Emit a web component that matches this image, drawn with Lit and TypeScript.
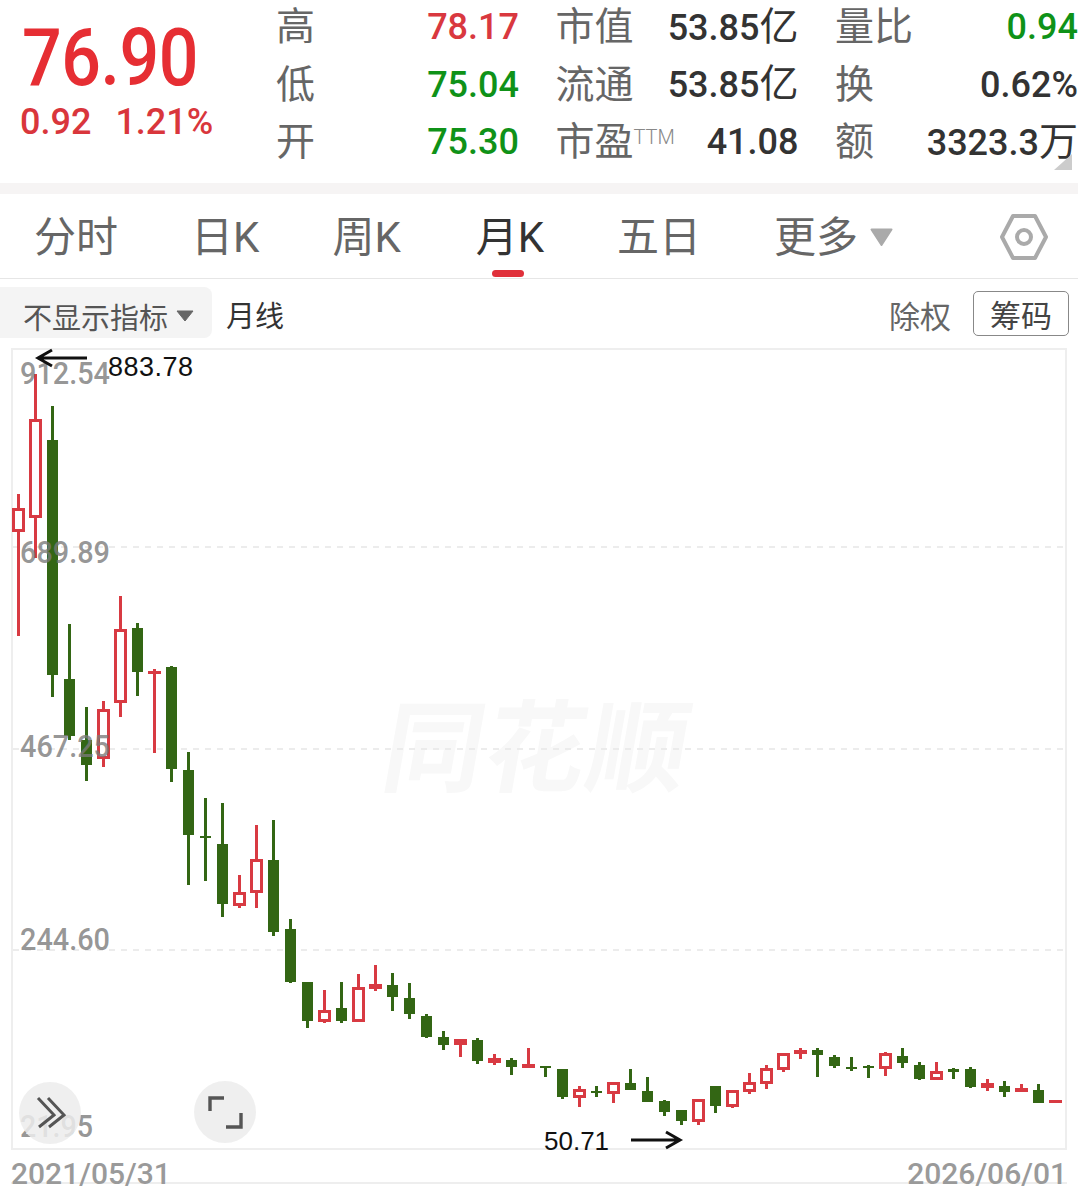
import { LitElement, html, css, svg } from "lit";
import { customElement } from "lit/decorators.js";

type C = [0 | 1, number, number, number, number];
// [red?, wickTop, wickBottom, bodyTop, bodyBottom]
const D: C[] = [
  [1,494,636,508,532],[1,374,558,419,518],[0,406,697,440,675],[0,624,740,679,736],[0,707,781,740,765],
  [1,701,767,709,759],[1,596,717,629,703],[0,623,696,628,672],[1,669,753,671,674],[0,666,782,667,769],
  [0,752,885,770,835],[0,798,881,836,838],[0,803,917,844,904],[1,875,908,892,906],[1,825,908,859,893],
  [0,820,936,860,932],[0,919,983,929,982],[0,982,1028,982,1021],[1,990,1023,1010,1022],[0,982,1023,1008,1021],
  [1,974,1022,987,1022],[1,965,991,984,989],[0,973,1011,985,997],[0,983,1019,998,1014],[0,1014,1038,1016,1037],
  [0,1031,1050,1037,1045],[1,1039,1057,1039,1045],[0,1038,1064,1040,1061],[1,1054,1065,1058,1063],[0,1058,1075,1060,1067],
  [1,1048,1068,1064,1068],[0,1066,1077,1066,1068],[0,1069,1099,1069,1097],[1,1086,1107,1089,1098],[0,1086,1097,1091,1093],
  [1,1082,1103,1082,1094],[0,1069,1090,1083,1090],[0,1077,1102,1091,1102],[0,1100,1116,1101,1112],[0,1110,1125,1110,1121],
  [1,1099,1125,1099,1122],[0,1086,1113,1086,1106],[1,1090,1108,1090,1107],[1,1073,1094,1082,1092],[1,1065,1089,1068,1084],
  [1,1053,1072,1053,1070],[1,1048,1059,1050,1054],[0,1048,1077,1050,1055],[0,1055,1068,1057,1066],[0,1057,1071,1067,1069],
  [0,1065,1078,1066,1068],[1,1052,1076,1053,1069],[0,1048,1068,1056,1063],[0,1062,1080,1065,1079],[1,1062,1080,1071,1080],
  [0,1068,1079,1069,1072],[0,1067,1088,1069,1087],[1,1079,1091,1083,1088],[0,1081,1097,1086,1092],[1,1084,1092,1088,1092],
  [0,1084,1103,1090,1103],[1,1100,1103,1100,1103],
];
const RED = "#d83a42";
const GREEN = "#336614";

function candle(c: C, i: number) {
  const [red, wt, wb, bt, bb] = c;
  const x = 18.5 + i * 17;
  if (!red) {
    return svg`<rect x=${x - 1.5} y=${wt} width="3" height=${wb - wt} fill=${GREEN}></rect>
      <rect x=${x - 5.5} y=${bt} width="11" height=${bb - bt} fill=${GREEN}></rect>`;
  }
  const wick = svg`<rect x=${x - 1.5} y=${wt} width="3" height=${wb - wt} fill=${RED}></rect>`;
  if (bb - bt <= 7) {
    return svg`${wick}<rect x=${x - 6.5} y=${bt} width="13" height=${bb - bt} fill=${RED}></rect>`;
  }
  return svg`${wick}<rect x=${x - 5} y=${bt + 1.5} width="10" height=${bb - bt - 3} fill="#fff" stroke=${RED} stroke-width="3"></rect>`;
}

@customElement("app-root")
export class AppRoot extends LitElement {
  static styles = css`
    :host { display: block; width: 1078px; height: 1192px; overflow: hidden; background: #fff;
      font-family: Roboto, "Noto Sans CJK SC", sans-serif; color: #333; }
    .head { display: flex; height: 183px; box-sizing: border-box; }
    .quote { width: 277px; flex: none; padding: 23px 0 0 22px; box-sizing: border-box; }
    .price { font-size: 79px; line-height: 70px; font-weight: 500; letter-spacing: -0.5px; transform: scaleX(.885); transform-origin: left; color: #e62e33; }
    .chg { display: flex; gap: 24px; margin: 8px 0 0 -2px; font-size: 36px; line-height: 42px; font-weight: 500; color: #d9363c; }
    .stats { display: grid; grid-template-columns: repeat(3, 242px); column-gap: 37.5px; grid-auto-rows: 57.5px; position: relative; flex: none; width: 801px; margin-top: -1px; align-content: start; }
    .cell { display: flex; justify-content: space-between; align-items: center; white-space: nowrap; }
    .lab { font-size: 39px; color: #666; font-weight: 400; line-height: 57px; margin-left: -1px; }
    .lab sup { font: 300 20px Roboto, sans-serif; color: #888; vertical-align: 11px; line-height: 0; }
    .val { font-size: 36px; font-weight: 500; line-height: 57px; color: #333; }
    .val i { font-style: normal; font-size: 39px; font-weight: 400; }
    .r { color: #d9383f; } .g { color: #0f9218; }
    .corner { position: absolute; right: 6px; bottom: 13px; width: 0; height: 0; border-left: 18px solid transparent; border-bottom: 16px solid #ccc; }
    .band { height: 11px; background: #f6f4f4; }
    .tabs { height: 84px; display: flex; border-bottom: 1px solid #e6e6e6; padding: 0 30px 0 34px; align-items: center; gap: 73px; box-sizing: content-box; }
    .tab { position: relative; font-size: 42px; line-height: 84px; color: #666; white-space: nowrap; display: flex; align-items: center; font-weight: 400; margin-top: 3px; }
    .tab.on { color: #333; margin-left: 2px; }
    .tab.on::after { content: ""; position: absolute; left: 16px; bottom: 3px; width: 32px; height: 7px; border-radius: 4px; background: #e0303a; }
    .tri { margin-left: 11px; margin-top: -2px; }
    .gear { margin-left: auto; margin-top: 2px; display: block; }
    .tools { height: 69px; display: flex; align-items: center; position: relative; }
    .sel { width: 212px; height: 51px; margin-top: -2px; box-sizing: border-box; background: #f4f4f4; border-radius: 0 8px 8px 0; display: flex; align-items: center; padding: 6px 0 0 23px; font-size: 29px; color: #555; gap: 8px; white-space: nowrap; font-weight: 400; }
    .line { font-size: 29px; color: #333; margin-left: 14px; margin-top: 1px; }
    .fq { margin-left: auto; font-size: 31px; color: #666; margin-top: 2px; }
    .chip { margin: -1px 9px 0 22px; width: 96px; height: 45px; box-sizing: border-box; border: 1px solid #888; border-radius: 5px; font-size: 31px; color: #444; display: flex; align-items: center; justify-content: center; }
    .chart { position: relative; margin-left: 11px; width: 1056px; height: 802px; box-sizing: border-box; border: 2px solid #eee; }
    .wm { position: absolute; left: 373px; top: 336px; font: 700 100px/110px "Noto Sans CJK SC", sans-serif; color: #f8f8f8; transform: skewX(-10deg); white-space: nowrap; letter-spacing: 2px; }
    svg.plot { position: absolute; left: -2px; top: -2px; overflow: visible; }
    .axis { font: 500 31px Roboto, sans-serif; fill: rgba(122,122,122,.8); }
    .note { font: 400 27px "Liberation Sans", sans-serif; fill: #111; letter-spacing: .5px; }
    .note.low { font-size: 26px; letter-spacing: 0; }
    .btn { position: absolute; width: 62px; height: 62px; border-radius: 50%; background: rgba(236,236,236,.85); display: flex; align-items: center; justify-content: center; }
    .b1 { left: 6px; top: 732px; }
    .b2 { left: 181px; top: 731px; }
    .dates { height: 32px; margin: 0 11px; display: flex; justify-content: space-between; border-bottom: 2px solid #eee; font-size: 30px; font-weight: 500; line-height: 48px; color: #9a9a9a; }
  `;

  render() {
    const row = (a: unknown, b: unknown, cl = "") => html`<div class="cell"><span class="lab">${a}</span><span class="val ${cl}">${b}</span></div>`;
    return html`
      <div class="head">
        <div class="quote">
          <div class="price">76.90</div>
          <div class="chg"><span>0.92</span><span>1.21%</span></div>
        </div>
        <div class="stats">
          ${row("高", "78.17", "r")}${row("市值", html`53.85<i>亿</i>`)}${row("量比", "0.94", "g")}
          ${row("低", "75.04", "g")}${row("流通", html`53.85<i>亿</i>`)}${row("换", "0.62%")}
          ${row("开", "75.30", "g")}${row(html`市盈<sup>TTM</sup>`, "41.08")}${row("额", html`3323.3<i>万</i>`)}
          <div class="corner"></div>
        </div>
      </div>
      <div class="band"></div>
      <div class="tabs">
        <div class="tab">分时</div>
        <div class="tab">日K</div>
        <div class="tab">周K</div>
        <div class="tab on">月K</div>
        <div class="tab">五日</div>
        <div class="tab">更多<svg class="tri" width="25" height="20" viewBox="0 0 25 20"><path d="M2.5 2.5h20L12.5 18z" fill="#aaa" stroke="#aaa" stroke-width="2" stroke-linejoin="round"/></svg></div>
        <svg class="gear" width="48" height="48" viewBox="0 0 48 48" fill="none" stroke="#aaa" stroke-width="4" stroke-linejoin="round"><path d="M13 3h22l11 21-11 21H13L2 24z"/><circle cx="24" cy="24" r="7"/></svg>
      </div>
      <div class="tools">
        <div class="sel">不显示指标<svg width="18" height="12" viewBox="0 0 18 12"><path d="M1 1h16L9 11z" fill="#666" stroke="#666" stroke-linejoin="round"/></svg></div>
        <div class="line">月线</div>
        <div class="fq">除权</div>
        <div class="chip">筹码</div>
      </div>
      <div class="chart">
        <div class="wm">同花顺</div>
        <svg class="plot" width="1056" height="802" viewBox="11 348 1056 802">
          ${[547, 749, 950].map((y) => svg`<line x1="13" x2="1065" y1=${y} y2=${y} stroke="#e6e6e6" stroke-width="1.5" stroke-dasharray="6 6"></line>`)}
          ${D.map((c, i) => candle(c, i))}
          <text class="axis" x="20" y="384" textLength="90" lengthAdjust="spacingAndGlyphs">912.54</text>
          <text class="axis" x="20" y="563" textLength="90" lengthAdjust="spacingAndGlyphs">689.89</text>
          <text class="axis" x="20" y="757" textLength="90" lengthAdjust="spacingAndGlyphs">467.25</text>
          <text class="axis" x="20" y="950" textLength="90" lengthAdjust="spacingAndGlyphs">244.60</text>
          <text class="axis" x="20" y="1137" textLength="73" lengthAdjust="spacingAndGlyphs">21.95</text>
          <text class="note" x="108" y="376">883.78</text>
          <text class="note low" x="544" y="1150">50.71</text>
          <path d="M87 358H38M52 350l-14 8 14 8" fill="none" stroke="#111" stroke-width="3"/>
          <path d="M631 1140h49M666 1132l14 8-14 8" fill="none" stroke="#111" stroke-width="3"/>
        </svg>
        <div class="btn b1"><svg width="36" height="36" viewBox="0 0 36 36" fill="none" stroke="#555" stroke-width="3"><path d="M6 3l16 17L7 32M16 3l16 17-15 12"/></svg></div>
        <div class="btn b2"><svg width="36" height="36" viewBox="0 0 36 36" fill="none" stroke="#555" stroke-width="3.4"><path d="M3 17V4h14M34 19v14H19"/></svg></div>
      </div>
      <div class="dates"><span>2021/05/31</span><span>2026/06/01</span></div>
    `;
  }
}
